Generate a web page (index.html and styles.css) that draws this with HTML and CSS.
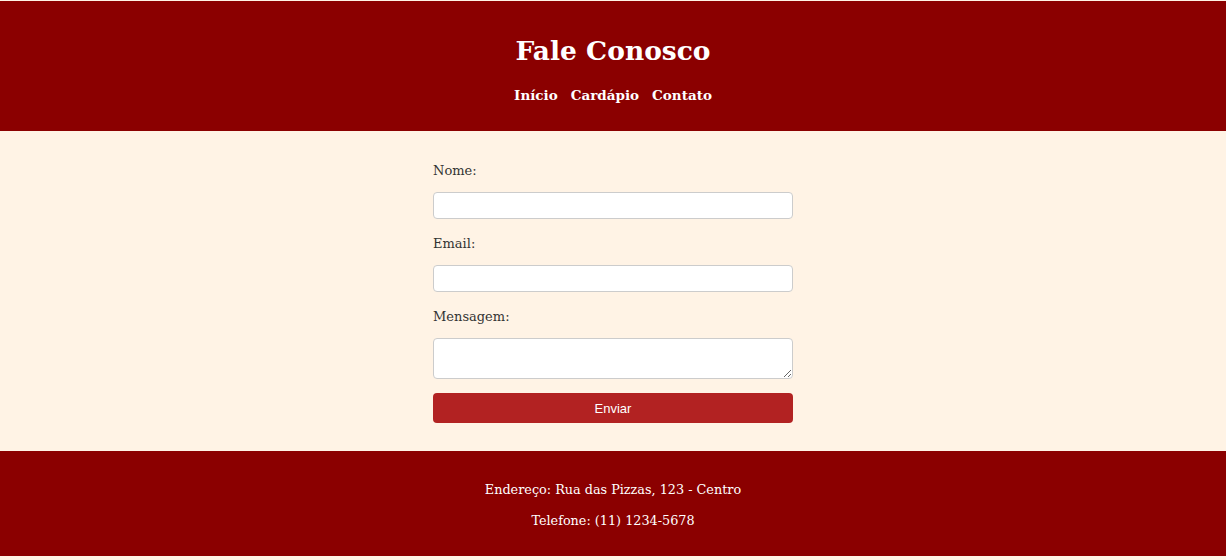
FILE: index.html
```html
<!DOCTYPE html>
<html lang="pt-BR">
<head>
<meta charset="utf-8">
<title>Fale Conosco</title>
<link rel="stylesheet" href="styles.css">
</head>
<body>
<header class="site-header">
  <h1 class="title">Fale Conosco</h1>
  <nav class="nav">
    <a href="#">Início</a>
    <a href="#">Cardápio</a>
    <a href="#">Contato</a>
  </nav>
</header>
<main class="content">
  <form class="contact-form">
    <label class="label" for="nome">Nome:</label>
    <input class="field" id="nome" type="text">
    <label class="label" for="email">Email:</label>
    <input class="field" id="email" type="email">
    <label class="label" for="msg">Mensagem:</label>
    <textarea class="field area" id="msg"></textarea>
    <button class="submit" type="button">Enviar</button>
  </form>
</main>
<footer class="site-footer">
  <p class="foot-line">Endereço: Rua das Pizzas, 123 - Centro</p>
  <p class="foot-line">Telefone: (11) 1234-5678</p>
</footer>
</body>
</html>
```
FILE: styles.css
```css
html, body {
  margin: 0;
  padding: 0;
}
body {
  background: #fff3e5;
  font-family: "DejaVu Serif", Georgia, serif;
  color: #333;
  padding-top: 1px;
}
.site-header {
  background: #8b0000;
  color: #fff;
  height: 130px;
  display: flex;
  flex-direction: column;
  align-items: center;
  box-sizing: border-box;
  padding-top: 33px;
}
.title {
  margin: 0;
  font-size: 26.5px;
  line-height: 34px;
  font-weight: bold;
}
.nav {
  margin-top: 18px;
  display: flex;
  gap: 13px;
}
.nav a {
  color: #fff;
  text-decoration: none;
  font-weight: bold;
  font-size: 13.5px;
  line-height: 18px;
}
.content {
  display: flex;
  justify-content: center;
  padding: 30px 0 28px;
}
.contact-form {
  width: 360px;
  display: flex;
  flex-direction: column;
}
.label {
  font-size: 13px;
  line-height: 20px;
  margin: 0 0 11px;
  color: #333;
}
.field {
  box-sizing: border-box;
  height: 27px;
  border: 1px solid #ccc;
  border-radius: 4px;
  background: #fff;
  margin: 0 0 15px;
  font: inherit;
}
.area {
  height: 41px;
  margin-bottom: 14px;
  resize: vertical;
}
.submit {
  height: 30px;
  border: none;
  border-radius: 4px;
  background: #b22222;
  color: #fff;
  font-family: "Liberation Sans", Arial, sans-serif;
  font-size: 13px;
  cursor: pointer;
}
.site-footer {
  background: #8b0000;
  color: #fff;
  height: 105px;
  box-sizing: border-box;
  padding-top: 29px;
  text-align: center;
}
.foot-line {
  margin: 0 0 11px;
  font-size: 12.8px;
  line-height: 20px;
}
```
